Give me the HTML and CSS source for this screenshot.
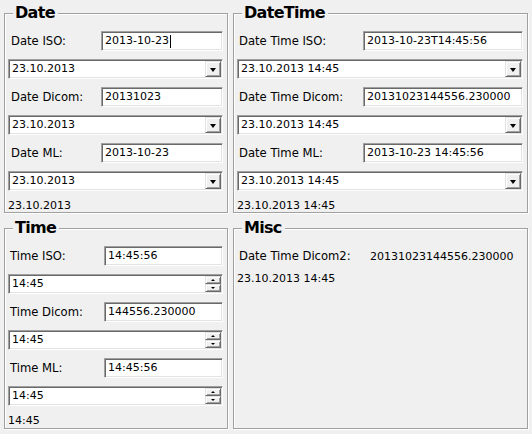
FILE: index.html
```html
<!DOCTYPE html>
<html>
<head>
<meta charset="utf-8">
<link rel="stylesheet" href="styles.css">
</head>
<body>
<div class="page">
  <fieldset class="group">
    <legend>Date</legend>
    <div class="form form-date">
      <span class="lbl">Date ISO:</span>
      <div class="field">2013-10-23<span class="caret"></span></div>
      <div class="combo"><span class="val">23.10.2013</span><span class="drop"><span class="tri"></span></span></div>
      <span class="lbl">Date Dicom:</span>
      <div class="field">20131023</div>
      <div class="combo"><span class="val">23.10.2013</span><span class="drop"><span class="tri"></span></span></div>
      <span class="lbl">Date ML:</span>
      <div class="field">2013-10-23</div>
      <div class="combo"><span class="val">23.10.2013</span><span class="drop"><span class="tri"></span></span></div>
      <span class="out">23.10.2013</span>
    </div>
  </fieldset>

  <fieldset class="group">
    <legend>DateTime</legend>
    <div class="form form-datetime">
      <span class="lbl">Date Time ISO:</span>
      <div class="field">2013-10-23T14:45:56</div>
      <div class="combo"><span class="val">23.10.2013 14:45</span><span class="drop"><span class="tri"></span></span></div>
      <span class="lbl">Date Time Dicom:</span>
      <div class="field">20131023144556.230000</div>
      <div class="combo"><span class="val">23.10.2013 14:45</span><span class="drop"><span class="tri"></span></span></div>
      <span class="lbl">Date Time ML:</span>
      <div class="field">2013-10-23 14:45:56</div>
      <div class="combo"><span class="val">23.10.2013 14:45</span><span class="drop"><span class="tri"></span></span></div>
      <span class="out">23.10.2013 14:45</span>
    </div>
  </fieldset>

  <fieldset class="group">
    <legend>Time</legend>
    <div class="form form-time">
      <span class="lbl">Time ISO:</span>
      <div class="field">14:45:56</div>
      <div class="combo"><span class="val">14:45</span><span class="spin"><span class="sb"><span class="tu"></span></span><span class="sb"><span class="td"></span></span></span></div>
      <span class="lbl">Time Dicom:</span>
      <div class="field">144556.230000</div>
      <div class="combo"><span class="val">14:45</span><span class="spin"><span class="sb"><span class="tu"></span></span><span class="sb"><span class="td"></span></span></span></div>
      <span class="lbl">Time ML:</span>
      <div class="field">14:45:56</div>
      <div class="combo"><span class="val">14:45</span><span class="spin"><span class="sb"><span class="tu"></span></span><span class="sb"><span class="td"></span></span></span></div>
      <span class="out">14:45</span>
    </div>
  </fieldset>

  <fieldset class="group">
    <legend>Misc</legend>
    <div class="misc">
      <span class="lbl">Date Time Dicom2:</span>
      <span class="mval">20131023144556.230000</span>
      <span class="out">23.10.2013 14:45</span>
    </div>
  </fieldset>
</div>
</body>
</html>
```

FILE: styles.css
```css
html, body {
  margin: 0;
  padding: 0;
  background: #f0f0f0;
}
body {
  font-family: "DejaVu Sans", Verdana, sans-serif;
  font-size: 11px;
  color: #000;
}
.page {
  display: grid;
  grid-template-columns: 224px 295px;
  grid-template-rows: 209px 210px;
  column-gap: 5px;
  row-gap: 6px;
  padding: 4px;
}
.group {
  margin: 0;
  min-width: 0;
  border: 1px solid #a0a0a0;
  box-shadow: inset 1px 1px #fff, 1px 1px #fff;
  padding: 9px 4px 0 3px;
}
.group legend {
  font-weight: bold;
  font-size: 16px;
  letter-spacing: -0.7px;
  line-height: 18px;
  padding: 0 3px 0 2px;
  margin-left: 5px;
  background: #f0f0f0;
}
.form {
  display: grid;
  grid-template-columns: 1fr 122px;
  row-gap: 8px;
  align-items: center;
}
.form-datetime { grid-template-columns: 1fr 160px; }
.form-time { grid-template-columns: 1fr 119px; }
.lbl {
  padding-left: 3px;
  font-size: 11.6px;
  line-height: 20px;
  white-space: nowrap;
}
.form-datetime .lbl { padding-left: 2px; }
.form-time .lbl { padding-left: 2px; }
.field, .combo {
  box-sizing: border-box;
  height: 20px;
  background: #fff;
  border-top: 1px solid #a0a0a0;
  border-left: 1px solid #a0a0a0;
  border-bottom: 1px solid #fff;
  border-right: 1px solid #fff;
  box-shadow: inset 1px 1px #696969, inset -1px -1px #e3e3e3;
  line-height: 18px;
  white-space: nowrap;
  overflow: hidden;
}
.field {
  padding: 0 2px 0 3px;
  display: flex;
  align-items: center;
}
.caret {
  display: inline-block;
  width: 1px;
  height: 13px;
  background: #000;
  margin-left: 1px;
}
.combo {
  grid-column: 1 / -1;
  display: flex;
  align-items: stretch;
  padding: 1px 1px 1px 3px;
}
.combo .val {
  flex: 1;
  line-height: 16px;
}
.drop, .sb {
  box-sizing: border-box;
  background: #f0f0f0;
  border-top: 1px solid #e3e3e3;
  border-left: 1px solid #e3e3e3;
  border-right: 1px solid #696969;
  border-bottom: 1px solid #696969;
  box-shadow: inset 1px 1px #fff, inset -1px -1px #a0a0a0;
  display: flex;
  align-items: center;
  justify-content: center;
}
.drop {
  width: 16px;
  height: 16px;
}
.tri {
  width: 0;
  height: 0;
  border-left: 3.5px solid transparent;
  border-right: 3.5px solid transparent;
  border-top: 4px solid #000;
  margin-top: 1px;
}
.spin {
  display: flex;
  flex-direction: column;
  width: 16px;
}
.sb {
  width: 16px;
  height: 8px;
}
.tu, .td {
  width: 0;
  height: 0;
  border-left: 2.5px solid transparent;
  border-right: 2.5px solid transparent;
}
.tu { border-bottom: 2px solid #000; }
.td { border-top: 2px solid #000; }
.out {
  grid-column: 1 / -1;
  line-height: 13px;
  padding-left: 0;
  white-space: nowrap;
}
.misc {
  display: grid;
  grid-template-columns: 133px auto;
  row-gap: 6px;
  align-items: center;
}
.misc .lbl { padding-left: 2px; }
.misc .out { line-height: 14px; }
```
